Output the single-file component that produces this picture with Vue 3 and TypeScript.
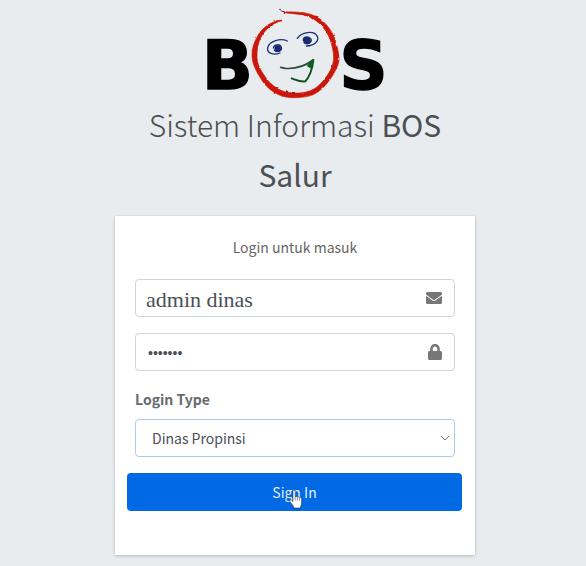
<script setup lang="ts">
import { ref } from 'vue'

const username = ref('admin dinas')
const password = ref('dinas12')
const loginType = ref('propinsi')

const loginTypes = [
  { value: 'propinsi', label: 'Dinas Propinsi' },
  { value: 'kabupaten', label: 'Dinas Kabupaten' },
  { value: 'sekolah', label: 'Sekolah' },
]
</script>

<template>
  <main class="login-page">
    <header class="brand">
      <svg class="brand-logo" viewBox="0 0 570 297" role="img" aria-label="BOS">
        <defs>
          <filter id="rough" x="-5%" y="-5%" width="110%" height="110%">
            <feTurbulence type="fractalNoise" baseFrequency="0.07" numOctaves="2" seed="4" result="n" />
            <feDisplacementMap in="SourceGraphic" in2="n" scale="7" xChannelSelector="R" yChannelSelector="G" />
          </filter>
        </defs>
        <text class="logo-letter" x="5" y="268">B</text>
        <text class="logo-letter" x="418" y="268">S</text>
        <path
          filter="url(#rough)"
          fill="#cb1708"
          stroke="#cb1708"
          stroke-width="2"
          d="M245 60C215 63 187 82 173 108C160 130 153 155 157 178C161 202 174 222 187 243C203 266 228 285 254 290C277 295 308 294 334 286C362 276 383 250 397 228C408 209 418 192 417 175C417 158 411 140 406 121C400 101 388 82 370 65C352 49 331 40 306 38C288 35 268 36 252 35L252 38C270 41 289 41 306 44C327 47 345 58 359 71C375 86 385 103 391 121C396 137 401 153 401 175C400 197 390 216 376 234C361 256 342 270 322 275C300 281 276 280 254 275C230 268 208 250 194 228C182 210 172 193 171 173C170 151 174 129 183 112C195 89 215 70 245 62Z"
        />
        <path d="M238 28l5 2M244 33l8 2M259 272l4 2M276 278l8 1" stroke="#40201c" stroke-width="3" />
        <g fill="none" stroke="#1b2f7c" stroke-linecap="round">
          <path d="M262 123C242 114 208 122 203 143C200 160 220 167 240 159" stroke-width="4" />
          <path d="M220 144C222 132 240 131 244 142C247 153 231 159 223 151" stroke-width="4" />
          <path d="M292 115C304 97 342 89 352 109C358 124 342 138 319 138" stroke-width="4" />
          <path d="M310 121C309 110 326 106 333 117C337 129 321 134 312 127" stroke-width="4" />
        </g>
        <g fill="#1b2870">
          <circle cx="233" cy="146" r="10" />
          <circle cx="321" cy="122" r="11" />
        </g>
        <g fill="none" stroke-linecap="round" stroke-linejoin="round">
          <path d="M242 202L256 205C282 207 307 204 339 180" stroke="#2b4a35" stroke-width="5" />
          <path d="M340 180C337 207 329 230 316 244C302 247 289 240 275 235" stroke="#0f5122" stroke-width="6" />
          <path d="M340 179L323 197L333 204Z" fill="#08631d" stroke="#08631d" stroke-width="4" />
        </g>
      </svg>
      <h1 class="brand-title">Sistem Informasi <b>BOS Salur</b></h1>
    </header>

    <section class="card">
      <p class="intro">Login untuk masuk</p>
      <form @submit.prevent>
        <div class="field">
          <input v-model="username" class="control username" type="text" aria-label="Username" />
          <svg class="field-icon" viewBox="0 0 512 512" aria-hidden="true">
            <path d="M502 191c4-3 10 0 10 5v204c0 27-21 48-48 48H48c-27 0-48-21-48-48V196c0-5 6-8 10-5 22 17 52 40 154 114 21 15 57 48 92 47 35 1 72-32 92-47 102-74 132-97 154-114zM256 320c23 0 57-29 73-41 133-96 143-104 174-128 6-5 9-12 9-19v-20c0-27-21-48-48-48H48c-27 0-48 21-48 48v20c0 7 3 14 9 19 31 24 41 32 174 128 16 12 50 41 73 41z" />
          </svg>
        </div>
        <div class="field">
          <input v-model="password" class="control password" type="password" aria-label="Password" />
          <svg class="field-icon" viewBox="0 0 448 512" preserveAspectRatio="xMaxYMid meet" aria-hidden="true">
            <path d="M400 224h-24v-72C376 68 308 0 224 0S72 68 72 152v72H48c-27 0-48 21-48 48v192c0 27 21 48 48 48h352c27 0 48-21 48-48V272c0-27-21-48-48-48zm-104 0H152v-72c0-40 32-72 72-72s72 32 72 72v72z" />
          </svg>
        </div>
        <label class="type-label" for="login-type">Login Type</label>
        <div class="field focused">
          <select id="login-type" v-model="loginType" class="control type-select">
            <option v-for="t in loginTypes" :key="t.value" :value="t.value">{{ t.label }}</option>
          </select>
          <svg class="chevron" viewBox="0 0 10 6" aria-hidden="true">
            <path d="M1 1l4 4 4-4" />
          </svg>
        </div>
        <button class="submit" type="submit">
          Sign In
          <svg class="pointer" viewBox="0 0 14 19" aria-hidden="true">
            <path d="M4 1.5c0-1.300 2.200-1.300 2.200 0V7c.4-.8 2-.7 2.200.3.500-.8 2-.6 2.200.5.700-.6 2-.2 2 1V13c0 2-1 3-1.300 5H5.200C4.500 15.500 2 13.500 1 11.500c-.6-1.200.8-2 1.700-1.200L4 11.600z" />
            <path class="pointer-lines" d="M6.200 7v3.500M8.400 7.500v3M10.600 8v2.500" />
          </svg>
        </button>
      </form>
    </section>
  </main>
</template>

<style>
body {
  background: #e9ecef;
}
</style>

<style scoped>
.login-page {
  box-sizing: border-box;
  min-height: 100vh;
  padding: 0 8px 8px;
  display: flex;
  flex-direction: column;
  align-items: center;
  margin-left: 4px;
  background: #e9ecef;
  color: #4b5054;
  font-family: "Noto Sans CJK SC", "Noto Sans", sans-serif;
  font-size: 14px;
  line-height: 24px;
}
.brand {
  width: 100%;
  max-width: 360px;
  margin-bottom: 17px;
  text-align: center;
}
.brand-logo {
  display: block;
  width: 190px;
  margin: 0 auto;
  overflow: visible;
}
.logo-letter {
  font-family: "DejaVu Sans", sans-serif;
  font-weight: 700;
  font-size: 202px;
  stroke: #000;
  stroke-width: 4px;
}
.brand-title {
  margin: 0 30px;
  font-size: 30px;
  font-weight: 300;
  line-height: 50px;
}
.brand-title b {
  font-weight: 400;
}
.card {
  box-sizing: border-box;
  width: 100%;
  max-width: 360px;
  padding: 19px 20px 44px;
  background: #fff;
  box-shadow: 0 0 1px rgba(0, 0, 0, 0.13), 0 1px 3px rgba(0, 0, 0, 0.2);
}
.intro {
  margin: 0 0 20px;
  text-align: center;
  color: #666;
}
.field {
  box-sizing: border-box;
  height: 38px;
  margin-bottom: 16px;
  display: flex;
  align-items: center;
  border: 1px solid #ced4da;
  border-radius: 4px;
}
.focused {
  border-color: #a9cdee;
}
.control {
  flex: 1;
  min-width: 0;
  height: 36px;
  padding: 0 12px;
  border: 0;
  outline: 0;
  background: transparent;
  color: #495057;
  font: inherit;
}
.username {
  padding: 4px 10px 0;
  font-family: "Liberation Serif", serif;
  font-size: 22px;
}
.password {
  padding-top: 2px;
  font-family: "Liberation Sans", sans-serif;
}
.field-icon {
  width: 16px;
  height: 16px;
  margin-right: 12px;
  fill: #777;
}
.type-label {
  display: block;
  margin-bottom: 8px;
  font-weight: 700;
  color: #666a6e;
}
.type-select {
  appearance: none;
  padding: 0 16px;
}
.chevron {
  width: 10px;
  height: 6px;
  margin-right: 4px;
  fill: none;
  stroke: #6c757d;
}
.submit {
  position: relative;
  display: block;
  width: calc(100% + 15px);
  height: 38px;
  margin: 0 -8px;
  padding: 0;
  border: 0;
  border-radius: 4px;
  background: #0069e3;
  color: #e4eefb;
  font: inherit;
  cursor: pointer;
}
.pointer {
  position: absolute;
  left: 50%;
  top: 50%;
  width: 14px;
  height: 19px;
  margin: -2px 0 0 -6px;
  fill: #fff;
  stroke: #222;
  stroke-width: 0.5;
}
.pointer-lines {
  fill: none;
}
</style>
